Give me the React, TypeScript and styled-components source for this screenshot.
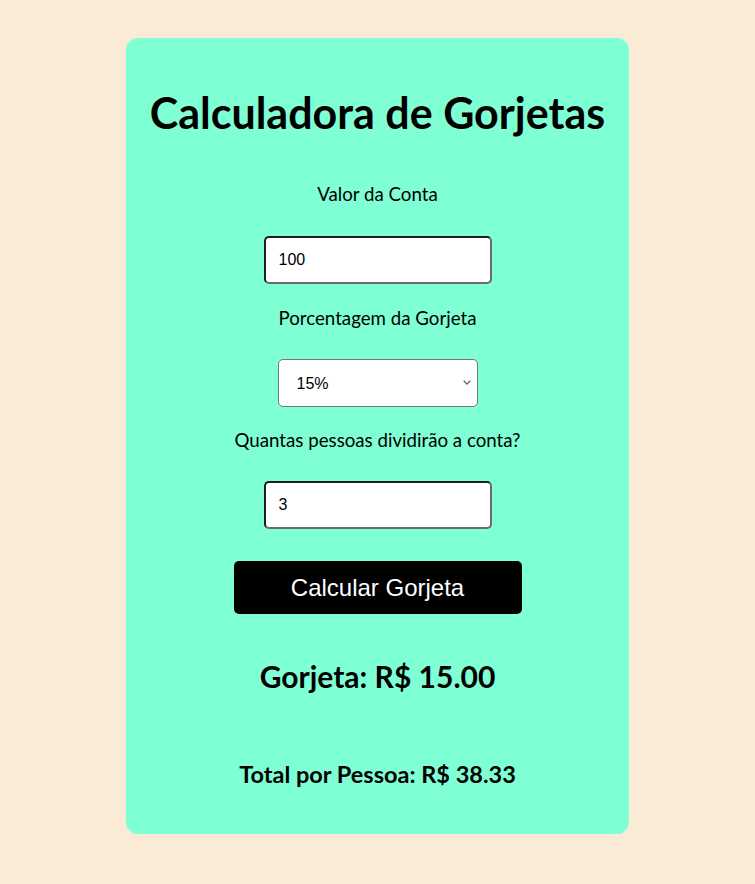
import React, { useState } from "react";
import styled, { createGlobalStyle } from "styled-components";

const Global = createGlobalStyle`
  body {
    margin: 8px;
    background: #faebd7;
    font-family: "Lato", "Open Sans", sans-serif;
  }
`;

const Card = styled.div`
  width: 503px;
  margin: 30px auto 0;
  background: #7fffd4;
  border-radius: 12px;
  padding: 50px 0 45px;
  box-sizing: border-box;
  display: flex;
  flex-direction: column;
  align-items: center;
  color: #000;
`;

const Title = styled.h1`
  margin: 0;
  font-size: 43px;
  line-height: 50px;
  font-weight: 700;
`;

const Label = styled.label<{ $mt: number }>`
  display: block;
  margin-top: ${(p) => p.$mt}px;
  font-size: 18.7px;
  line-height: 24px;
`;

const Input = styled.input<{ $mt: number }>`
  margin-top: ${(p) => p.$mt}px;
  width: 228px;
  height: 48px;
  box-sizing: border-box;
  padding: 0 13px;
  font-family: "Liberation Sans", Arial, sans-serif;
  font-size: 16px;
  border: 2px solid;
  border-color: #1e1e1e #6b6b6b #6b6b6b #1e1e1e;
  border-radius: 5px;
  background: #fff;
  color: #000;
  outline: none;
`;

const SelectWrap = styled.div`
  position: relative;
  margin-top: 29px;
  width: 200px;
  height: 48px;
`;

const Select = styled.select`
  appearance: none;
  -webkit-appearance: none;
  width: 100%;
  height: 100%;
  box-sizing: border-box;
  padding: 0 18px;
  font-family: "Liberation Sans", Arial, sans-serif;
  font-size: 16px;
  border: 1px solid #767676;
  border-radius: 5px;
  background: #fff;
  color: #000;
`;

const Chevron = styled.svg`
  position: absolute;
  right: 7px;
  top: 21px;
  width: 8px;
  height: 5px;
  pointer-events: none;
`;

const Button = styled.button`
  margin-top: 32px;
  width: 288px;
  height: 53px;
  border: none;
  border-radius: 5px;
  background: #000;
  color: #fff;
  font-family: "Liberation Sans", Arial, sans-serif;
  font-size: 24px;
  cursor: pointer;
`;

const Result = styled.h2<{ $mt: number; $size: number; $lh: number }>`
  margin: ${(p) => p.$mt}px 0 0;
  font-size: ${(p) => p.$size}px;
  line-height: ${(p) => p.$lh}px;
  font-weight: 700;
`;

export default function App() {
  const [bill, setBill] = useState("100");
  const [pct, setPct] = useState("15");
  const [people, setPeople] = useState("3");
  const [tip, setTip] = useState(15);
  const [per, setPer] = useState(38.33);

  const calc = () => {
    const b = parseFloat(bill) || 0;
    const t = (b * (parseFloat(pct) || 0)) / 100;
    const n = parseInt(people) || 1;
    setTip(t);
    setPer(Math.round(((b + t) / n) * 100) / 100);
  };

  return (
    <>
      <Global />
      <Card>
        <Title>Calculadora de Gorjetas</Title>
        <Label $mt={44} htmlFor="bill">Valor da Conta</Label>
        <Input $mt={30} id="bill" type="number" value={bill} onChange={(e) => setBill(e.target.value)} />
        <Label $mt={22} htmlFor="pct">Porcentagem da Gorjeta</Label>
        <SelectWrap>
          <Select id="pct" value={pct} onChange={(e) => setPct(e.target.value)}>
            <option value="10">10%</option>
            <option value="15">15%</option>
            <option value="20">20%</option>
          </Select>
          <Chevron viewBox="0 0 8 5">
            <path d="M0.7 0.7 L4 4 L7.3 0.7" fill="none" stroke="#6b6b6b" strokeWidth="1.4" />
          </Chevron>
        </SelectWrap>
        <Label $mt={21} htmlFor="people">Quantas pessoas dividirão a conta?</Label>
        <Input $mt={29} id="people" type="number" value={people} onChange={(e) => setPeople(e.target.value)} />
        <Button onClick={calc}>Calcular Gorjeta</Button>
        <Result $mt={42} $size={30} $lh={40}>Gorjeta: R$ {tip.toFixed(2)}</Result>
        <Result $mt={63} $size={23.5} $lh={30}>Total por Pessoa: R$ {per.toFixed(2)}</Result>
      </Card>
    </>
  );
}
